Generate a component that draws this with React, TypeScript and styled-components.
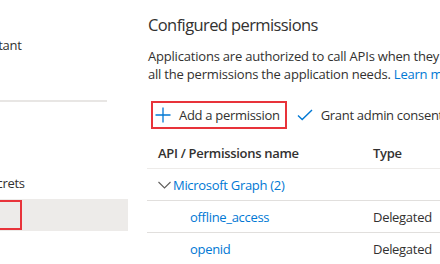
import styled, { createGlobalStyle } from "styled-components";

const GlobalStyle = createGlobalStyle`
  html, body {
    margin: 0;
    padding: 0;
    background: #ffffff;
  }
  body {
    width: 440px;
    height: 264px;
    overflow: hidden;
    font-family: "Open Sans", "Noto Sans", sans-serif;
    color: #323130;
    letter-spacing: -0.3px;
  }
`;

const Page = styled.div`
  display: flex;
  width: 440px;
  height: 264px;
  overflow: hidden;
`;

const Sidebar = styled.nav`
  flex: 0 0 128px;
  overflow: hidden;
`;

const SideInner = styled.div`
  margin-left: -96px;
  padding-top: 29px;
  display: flex;
  flex-direction: column;
`;

const SideItem = styled.div<{ active?: boolean }>`
  height: 32px;
  display: flex;
  align-items: center;
  font-size: 13px;
  white-space: nowrap;
  background: ${(props) => (props.active ? "#edebe9" : "transparent")};
`;

const SideDivider = styled.div`
  height: 2px;
  width: 203px;
  background: #e8e6e4;
  margin: 39px 0 65px;
`;

const Marked = styled.span`
  display: inline-block;
  height: 30px;
  line-height: 26px;
  padding-left: 8px;
  width: 118px;
  box-sizing: border-box;
  border: 2px solid #e8333a;
  color: transparent;
`;

const Main = styled.main`
  flex: 1;
  padding: 13px 0 0 20px;
  white-space: nowrap;
`;

const Title = styled.h2`
  margin: 0;
  font-size: 16.5px;
  font-weight: 400;
  line-height: 24px;
  letter-spacing: -0.6px;
  color: #323130;
`;

const Description = styled.p`
  margin: 10px 0 0;
  font-size: 13px;
  line-height: 18px;
  letter-spacing: -0.2px;
  color: #323130;
`;

const Link = styled.a`
  color: #0078d4;
  text-decoration: none;
`;

const Toolbar = styled.div`
  display: flex;
  align-items: center;
  gap: 6px;
  margin: 18px 0 0 3px;
`;

const CommandButton = styled.button<{ outlined?: boolean }>`
  display: flex;
  align-items: center;
  gap: 8px;
  height: 28px;
  padding: 0 5px 0 2px;
  background: transparent;
  border: 2px solid ${(props) => (props.outlined ? "#e8333a" : "transparent")};
  font-family: inherit;
  font-size: 13px;
  letter-spacing: -0.3px;
  color: #323130;
  cursor: pointer;
`;

const Table = styled.div`
  margin: 8px 0 0 -1px;
  width: 320px;
`;

const Row = styled.div<{ header?: boolean }>`
  display: grid;
  grid-template-columns: 226px 1fr;
  align-items: center;
  height: ${(props) => (props.header ? "31px" : "31px")};
  border-bottom: 1px solid ${(props) => (props.header ? "#edebe9" : "#e1dfdd")};
  font-size: 13px;
  font-weight: ${(props) => (props.header ? 600 : 400)};
`;

const Cell = styled.div<{ indent?: number }>`
  display: flex;
  align-items: center;
  gap: 2px;
  padding-left: ${(props) => props.indent ?? 11}px;
`;

const LinkText = styled.span`
  color: #0078d4;
`;

const PlusIcon = () => (
  <svg width="16" height="16" viewBox="0 0 16 16">
    <path d="M8 0.5V15.5M0.5 8H15.5" stroke="#0078d4" strokeWidth="1.3" fill="none" />
  </svg>
);

const CheckIcon = () => (
  <svg width="16" height="12" viewBox="0 0 16 12">
    <path d="M1 6.5L5.2 10.5L15 1" stroke="#0078d4" strokeWidth="1.4" fill="none" />
  </svg>
);

const ChevronDown = () => (
  <svg width="13" height="8" viewBox="0 0 13 8">
    <path d="M0.5 1L6.5 7L12.5 1" stroke="#605e5c" strokeWidth="1.1" fill="none" />
  </svg>
);

const permissions = [
  { name: "offline_access", type: "Delegated" },
  { name: "openid", type: "Delegated" },
];

function App() {
  return (
    <Page>
      <GlobalStyle />
      <Sidebar>
        <SideInner>
          <SideItem>Integration assistant</SideItem>
          <SideDivider />
          <SideItem>Certificates &amp; secrets</SideItem>
          <SideItem active>
            <Marked>API permissions</Marked>
          </SideItem>
        </SideInner>
      </Sidebar>
      <Main>
        <Title>Configured permissions</Title>
        <Description>
          Applications are authorized to call APIs when they are granted permissions by users/admins as part of the consent process. The list of configured permissions should include
          <br />
          all the permissions the application needs. <Link href="#">Learn more about permissions and consent</Link>
        </Description>
        <Toolbar>
          <CommandButton outlined>
            <PlusIcon />
            Add a permission
          </CommandButton>
          <CommandButton>
            <CheckIcon />
            Grant admin consent for Contoso
          </CommandButton>
        </Toolbar>
        <Table>
          <Row header>
            <Cell>API / Permissions name</Cell>
            <Cell indent={0}>Type</Cell>
          </Row>
          <Row>
            <Cell>
              <ChevronDown />
              <LinkText>Microsoft Graph (2)</LinkText>
            </Cell>
            <Cell indent={0} />
          </Row>
          {permissions.map((p) => (
            <Row key={p.name}>
              <Cell indent={43}>
                <LinkText>{p.name}</LinkText>
              </Cell>
              <Cell indent={0}>{p.type}</Cell>
            </Row>
          ))}
        </Table>
      </Main>
    </Page>
  );
}

export default App;
